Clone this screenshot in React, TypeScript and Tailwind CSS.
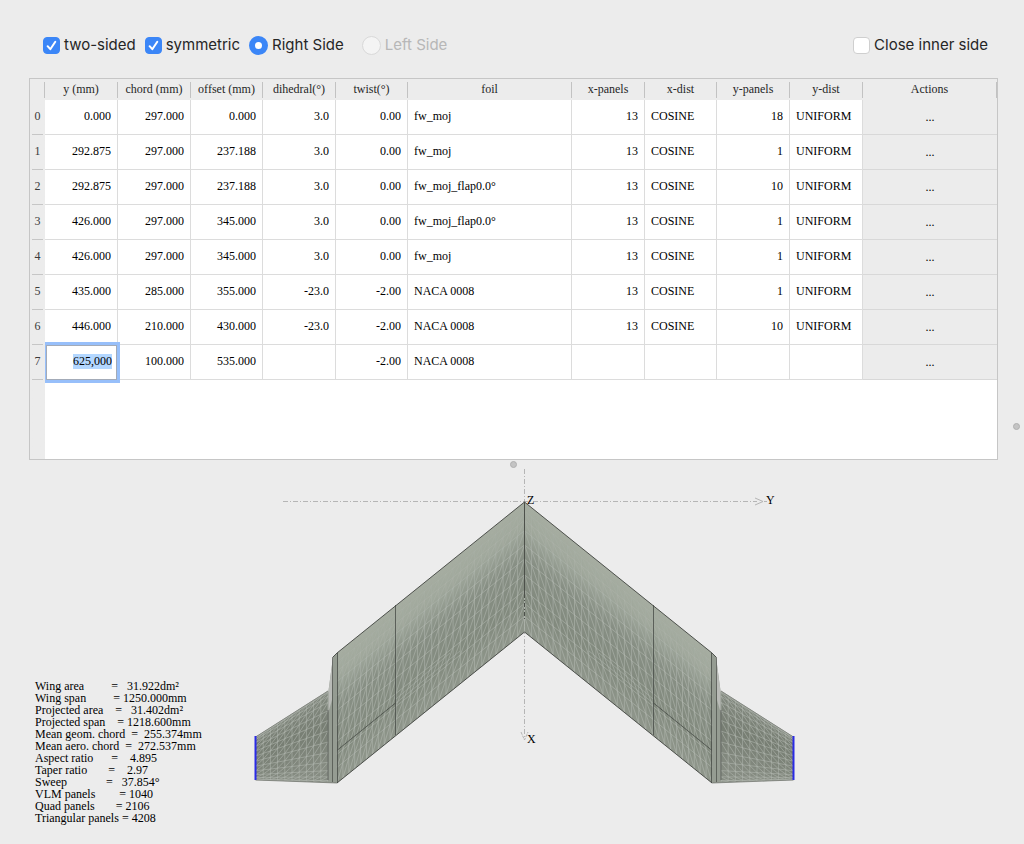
import { useEffect, useRef, useState, type ReactNode } from 'react';

interface Section {
  y: string;
  chord: string;
  offset: string;
  dihedral: string;
  twist: string;
  foil: string;
  xPanels: string;
  xDist: string;
  yPanels: string;
  yDist: string;
}

const sections: Section[] = [
  { y: '0.000', chord: '297.000', offset: '0.000', dihedral: '3.0', twist: '0.00', foil: 'fw_moj', xPanels: '13', xDist: 'COSINE', yPanels: '18', yDist: 'UNIFORM' },
  { y: '292.875', chord: '297.000', offset: '237.188', dihedral: '3.0', twist: '0.00', foil: 'fw_moj', xPanels: '13', xDist: 'COSINE', yPanels: '1', yDist: 'UNIFORM' },
  { y: '292.875', chord: '297.000', offset: '237.188', dihedral: '3.0', twist: '0.00', foil: 'fw_moj_flap0.0°', xPanels: '13', xDist: 'COSINE', yPanels: '10', yDist: 'UNIFORM' },
  { y: '426.000', chord: '297.000', offset: '345.000', dihedral: '3.0', twist: '0.00', foil: 'fw_moj_flap0.0°', xPanels: '13', xDist: 'COSINE', yPanels: '1', yDist: 'UNIFORM' },
  { y: '426.000', chord: '297.000', offset: '345.000', dihedral: '3.0', twist: '0.00', foil: 'fw_moj', xPanels: '13', xDist: 'COSINE', yPanels: '1', yDist: 'UNIFORM' },
  { y: '435.000', chord: '285.000', offset: '355.000', dihedral: '-23.0', twist: '-2.00', foil: 'NACA 0008', xPanels: '13', xDist: 'COSINE', yPanels: '1', yDist: 'UNIFORM' },
  { y: '446.000', chord: '210.000', offset: '430.000', dihedral: '-23.0', twist: '-2.00', foil: 'NACA 0008', xPanels: '13', xDist: 'COSINE', yPanels: '10', yDist: 'UNIFORM' },
  { y: '625,000', chord: '100.000', offset: '535.000', dihedral: '', twist: '-2.00', foil: 'NACA 0008', xPanels: '', xDist: '', yPanels: '', yDist: '' },
];

const columns: { key: keyof Section; label: string; width: string; left?: boolean }[] = [
  { key: 'y', label: 'y (mm)', width: 'w-[73px]' },
  { key: 'chord', label: 'chord (mm)', width: 'w-[73px]' },
  { key: 'offset', label: 'offset (mm)', width: 'w-[72px]' },
  { key: 'dihedral', label: 'dihedral(°)', width: 'w-[73px]' },
  { key: 'twist', label: 'twist(°)', width: 'w-[72px]' },
  { key: 'foil', label: 'foil', width: 'w-[164px]', left: true },
  { key: 'xPanels', label: 'x-panels', width: 'w-[73px]' },
  { key: 'xDist', label: 'x-dist', width: 'w-[72px]', left: true },
  { key: 'yPanels', label: 'y-panels', width: 'w-[73px]' },
  { key: 'yDist', label: 'y-dist', width: 'w-[73px]', left: true },
];

const summary = [
  'Wing area         =   31.922dm²',
  'Wing span         = 1250.000mm',
  'Projected area    =   31.402dm²',
  'Projected span    = 1218.600mm',
  'Mean geom. chord  =  255.374mm',
  'Mean aero. chord  =  272.537mm',
  'Aspect ratio      =    4.895',
  'Taper ratio       =    2.97',
  'Sweep             =   37.854°',
  'VLM panels        = 1040',
  'Quad panels       = 2106',
  'Triangular panels = 4208',
];

function CheckBox({ label, checked, onChange }: { label: string; checked: boolean; onChange: (v: boolean) => void }) {
  return (
    <label className="flex items-center gap-1">
      <span className="grid size-[17px] place-items-center">
        <input
          type="checkbox"
          checked={checked}
          onChange={(e) => onChange(e.target.checked)}
          className="col-start-1 row-start-1 size-[17px] appearance-none rounded-[4px] border border-[#cfcfcf] bg-white checked:border-[#3b86f7] checked:bg-[#3b86f7]"
        />
        {checked && (
          <svg viewBox="0 0 17 17" className="pointer-events-none col-start-1 row-start-1 size-[17px]" aria-hidden="true">
            <path d="M4.6 9.2 7.3 12.2 12.3 4.8" fill="none" stroke="#fff" strokeWidth="2" strokeLinecap="round" strokeLinejoin="round" />
          </svg>
        )}
      </span>
      {label}
    </label>
  );
}

function Radio({ label, checked, disabled, onChange }: { label: string; checked: boolean; disabled?: boolean; onChange?: () => void }) {
  return (
    <label className={disabled ? 'flex items-center gap-1 text-[#b7b7b7]' : 'flex items-center gap-1'}>
      <input
        type="radio"
        name="side"
        checked={checked}
        disabled={disabled}
        onChange={() => onChange?.()}
        className="size-[19px] appearance-none rounded-full border border-[#c4c4c4] bg-white checked:border-[6px] checked:border-[#3b86f7] disabled:border-[#d9d9d9] disabled:bg-[#f4f4f4]"
      />
      {label}
    </label>
  );
}

function SectionTable() {
  const [current, setCurrent] = useState('625,000');
  const editor = useRef<HTMLInputElement>(null);

  useEffect(() => {
    editor.current?.focus();
    editor.current?.select();
  }, []);

  const cell = (row: number, key: keyof Section): ReactNode => {
    if (row === 7 && key === 'y') {
      return (
        <input
          ref={editor}
          aria-label="y (mm), section 7"
          value={current}
          onChange={(e) => setCurrent(e.target.value)}
          className="mx-px block h-[35px] w-[71px] border border-[#a3abb8] bg-white pr-1 pb-[2px] text-right text-black shadow-[0_0_0_3px_#97bffa] outline-none [clip-path:inset(-3px_-3px_-3px_-1px)] selection:bg-[#b3d7ff] selection:text-black"
        />
      );
    }
    return sections[row][key];
  };

  return (
    <div className="h-[382px] border border-[#c6c6c6] bg-linear-to-r from-[#ececec] from-[15px] to-white to-[15px]">
      <table className="w-full table-fixed border-separate border-spacing-0 font-['Liberation_Serif',serif] text-xs text-black">
        <thead>
          <tr className="h-[21px] bg-[#ececec] text-[#262626]">
            <th className="w-[15px] p-0" aria-label="Section">
              <div className="h-4 border-r border-[#c2c2c2]" />
            </th>
            {columns.map((c) => (
              <th key={c.key} scope="col" className={`${c.width} p-0 font-normal`}>
                <div className="h-4 border-r border-[#c2c2c2] leading-[14px]">{c.label}</div>
              </th>
            ))}
            <th scope="col" className="p-0 font-normal">
              <div className="h-4 border-r border-[#c2c2c2] leading-[14px]">Actions</div>
            </th>
          </tr>
        </thead>
        <tbody>
          {sections.map((s, row) => (
            <tr key={row} className="h-[35px]">
              <th scope="row" className="p-0 font-normal text-[#3a3a3a]">
                <div className="mx-[2px] h-[35px] border-b border-[#c6c6c6] leading-8">{row}</div>
              </th>
              {columns.map((c) => (
                <td
                  key={c.key}
                  className={
                    row === 7 && c.key === 'y'
                      ? 'relative z-10 p-0'
                      : c.left
                        ? 'border-r border-b border-[#dcdcdc] bg-white p-0 pb-[2px] pl-[6px] text-left'
                        : 'border-r border-b border-[#dcdcdc] bg-white p-0 pr-[6px] pb-[2px] text-right'
                  }
                >
                  {cell(row, c.key)}
                </td>
              ))}
              <td className="border-b border-[#d8d8d8] bg-[#ececec] p-0">
                <button type="button" aria-label={`Actions for section ${row}`} className="block h-[34px] w-full pb-px text-center">
                  ...
                </button>
              </td>
            </tr>
          ))}
        </tbody>
      </table>
    </div>
  );
}

// One quad strip of the wing: [x, leading edge y, trailing edge y] at both ends
type Station = [number, number, number];

const mainChord = [0, 0.07, 0.14, 0.22, 0.33, 0.44, 0.56, 0.68, 0.78, 0.88, 1];
const tipChord = Array.from({ length: 14 }, (_, i) => (1 - Math.cos((Math.PI * i) / 13)) / 2);

function Mesh({ from, to, span, chord, fade = true }: { from: Station; to: Station; span: number; chord: number[]; fade?: boolean }) {
  const point = (i: number, j: number) => {
    const t = j / span;
    const x = from[0] + (to[0] - from[0]) * t;
    const top = from[1] + (to[1] - from[1]) * t;
    const bottom = from[2] + (to[2] - from[2]) * t;
    return `${x.toFixed(1)} ${(top + (bottom - top) * chord[i]).toFixed(1)}`;
  };

  const strips = [];
  for (let i = 0; i < chord.length - 1; i++) {
    let d = '';
    for (let j = 0; j < span; j++) {
      d += `M${point(i + 1, j)}L${point(i, j)}L${point(i + 1, j + 1)}`;
    }
    d += `M${point(i, 0)}L${point(i, span)}`;
    const opacity = fade ? Math.min(0.6, 0.04 + i * 0.14) : 0.6;
    strips.push(<path key={i} d={d} strokeOpacity={opacity} />);
  }
  return (
    <g fill="none" stroke="#b4bab3" strokeWidth="0.9">
      {strips}
    </g>
  );
}

function HalfWing() {
  return (
    <g>
      <path d="M328 691 255.500 737V780L337 783V700Z" fill="url(#tip)" />
      <Mesh from={[328, 691, 782]} to={[256, 737, 780]} span={10} chord={tipChord} fade={false} />
      <path d="M328 691 255.500 737M255.500 780 337 783" fill="none" stroke="#777b75" strokeWidth="0.8" />
      <path d="M524.500 502 337 653V783L524.500 632Z" fill="url(#skin)" />
      <path d="M337.500 653 333 657 328.500 691V782H337.500Z" fill="#959c92" />
      <path d="M333 657 328.500 691V712L332 700Z" fill="#b9bbb7" />
      <Mesh from={[524.5, 502, 632]} to={[396, 605, 735]} span={18} chord={mainChord} />
      <Mesh from={[396, 605, 735]} to={[337, 653, 783]} span={10} chord={mainChord} />
      <path d="M396 703 460 651M396 699 450 653" stroke="#b4bab3" strokeOpacity="0.6" strokeWidth="0.8" />
      <g fill="none" stroke="#3e423d" strokeWidth="0.9">
        <path d="M524.500 502 337 653 333 657M524.500 632 337 783" />
        <path d="M395.500 605V735M337.500 653V783M395.500 703 337.500 750" strokeOpacity="0.8" />
        <path d="M332.500 657V782M328 710V780" strokeOpacity="0.7" />
      </g>
      <path d="M255.500 736V780" stroke="#2a2ae6" strokeWidth="2" />
    </g>
  );
}

function WingView() {
  return (
    <svg viewBox="0 469 1008 375" className="block h-auto w-full" role="img" aria-label="Wing planform">
      <defs>
        <linearGradient id="skin" gradientUnits="userSpaceOnUse" x1="430" y1="578" x2="493" y2="657">
          <stop offset="0" stopColor="#a6ada1" />
          <stop offset="0.18" stopColor="#a0a89c" />
          <stop offset="0.42" stopColor="#878f84" />
          <stop offset="0.75" stopColor="#828a7e" />
          <stop offset="1" stopColor="#8f968b" />
        </linearGradient>
        <linearGradient id="tip" x1="0" y1="0" x2="0.3" y2="1">
          <stop offset="0" stopColor="#8d938a" />
          <stop offset="0.6" stopColor="#777e73" />
          <stop offset="1" stopColor="#868c82" />
        </linearGradient>
      </defs>

      <g fill="none" stroke="#b5b5b5">
        <path d="M283 501.500H757" strokeDasharray="5 2 1 2" />
        <path d="M524.500 469V740" strokeDasharray="5 2 1 2" />
        <path d="M755 498 763 501.500 755 505M764 501.500H767" />
        <path d="M521 732 524.500 740 528 732" strokeDasharray="3 1" />
      </g>

      <HalfWing />
      <g transform="translate(1049 0) scale(-1 1)">
        <HalfWing />
      </g>
      <path d="M524.500 502V594" stroke="#4c504a" />
      <path d="M524.500 594V620" stroke="#4c504a" strokeDasharray="4 2 1 2" />

      <g className="font-['Liberation_Serif',serif] text-xs" fill="#000">
        <text x="527" y="504">Z</text>
        <text x="766" y="504">Y</text>
        <text x="527" y="743">X</text>
      </g>
    </svg>
  );
}

function Grip() {
  return <span className="size-[7px] rounded-full border border-[#b0b0b0] bg-[#c4c4c4]" />;
}

export default function App() {
  const [twoSided, setTwoSided] = useState(true);
  const [symmetric, setSymmetric] = useState(true);
  const [closeInner, setCloseInner] = useState(false);

  return (
    <div className="flex min-h-screen bg-[#ececec] text-[#262626]">
      <main className="flex min-w-0 flex-1 flex-col">
        <div className="flex h-[78px] items-center justify-between pt-3 pr-5 pl-[43px] font-[Inter,sans-serif] text-[15px]">
          <div className="flex items-center">
            <div className="flex gap-[9px]">
              <CheckBox label="two-sided" checked={twoSided} onChange={setTwoSided} />
              <CheckBox label="symmetric" checked={symmetric} onChange={setSymmetric} />
            </div>
            <div className="ml-[9px] flex gap-[18px] pt-px">
              <Radio label="Right Side" checked />
              <Radio label="Left Side" checked={false} disabled />
            </div>
          </div>
          <CheckBox label="Close inner side" checked={closeInner} onChange={setCloseInner} />
        </div>

        <div className="pr-[10px] pl-[29px]">
          <SectionTable />
          <div className="flex h-[9px] items-center justify-center">
            <Grip />
          </div>
        </div>

        <div className="relative">
          <WingView />
          <pre className="absolute bottom-5 left-[35px] font-['Liberation_Serif',serif] text-xs leading-3 text-black">
            {summary.join('\n')}
          </pre>
        </div>
      </main>

      <div className="flex w-4 items-center justify-center pt-2">
        <Grip />
      </div>
    </div>
  );
}
